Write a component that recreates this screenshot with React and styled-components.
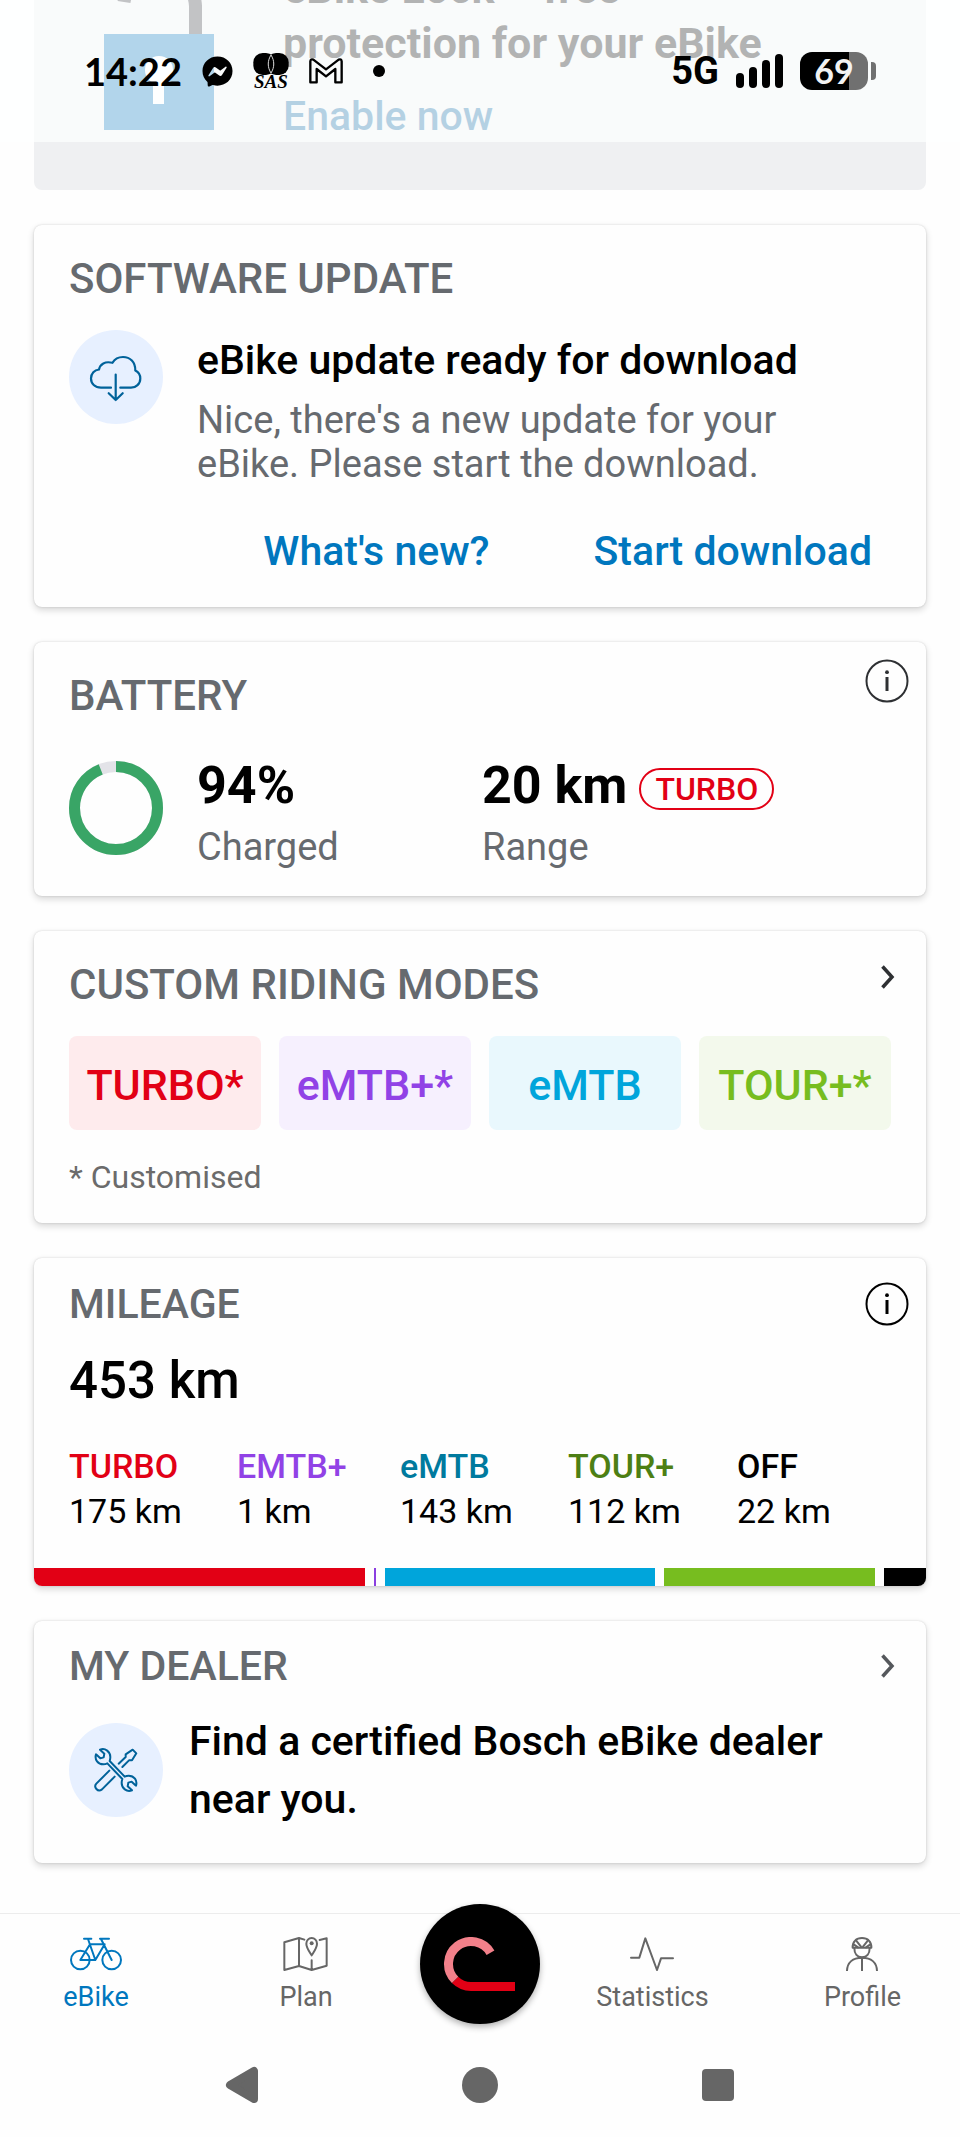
import React from 'react';
import styled, { createGlobalStyle } from 'styled-components';
import { FaFacebookMessenger } from 'react-icons/fa';

const GlobalStyle = createGlobalStyle`
  * {
    box-sizing: border-box;
  }

  body {
    margin: 0;
    background: #fefefe;
    color: #000;
    font-family: Roboto, "Liberation Sans", sans-serif;
  }

  h2, p, dl, dt, dd {
    margin: 0;
  }

  button {
    border: 0;
    padding: 0;
    background: none;
    color: inherit;
    font: inherit;
    cursor: pointer;
  }

  svg {
    display: block;
    flex: none;
  }
`;

const Screen = styled.div`
  position: relative;
  min-height: 100vh;
  display: flex;
  flex-direction: column;
`;

/* ---------- status bar ---------- */

const StatusBar = styled.header`
  position: absolute;
  top: 0;
  left: 0;
  right: 0;
  height: 142px;
  padding: 0 84px;
  display: flex;
  align-items: center;
  justify-content: space-between;
  background: rgba(254, 255, 255, 0.7);
`;

const StatusGroup = styled.div`
  display: flex;
  align-items: center;
  gap: ${(p) => p.$gap}px;
`;

const Clock = styled.span`
  font: 700 38px/44px Lato, sans-serif;
`;

const Carrier = styled.div`
  display: flex;
  flex-direction: column;
  align-items: center;
  font: italic 700 19px/14px "Liberation Serif", serif;
`;

const Dot = styled.span`
  width: 12px;
  height: 12px;
  margin-left: 10px;
  border-radius: 50%;
  background: #000;
`;

const Network = styled.span`
  font-size: 38px;
  line-height: 44px;
  font-weight: 700;
`;

const Signal = styled.span`
  display: flex;
  align-items: flex-end;
  gap: 5px;
`;

const SignalBar = styled.span`
  width: 8px;
  height: ${(p) => p.$height}px;
  border-radius: 4px;
  background: #000;
`;

const PhoneBattery = styled.span`
  display: flex;
  align-items: center;
  gap: 3px;

  &::after {
    content: '';
    width: 5px;
    height: 18px;
    border-radius: 0 4px 4px 0;
    background: #707070;
  }
`;

const PhoneLevel = styled.span`
  width: 68px;
  height: 38px;
  border-radius: 12px;
  background: linear-gradient(to right, #000 72%, #707070 72%);
  color: #f2f2f2;
  text-align: center;
  font: 700 34px/38px Lato, sans-serif;
`;

/* ---------- cards ---------- */

const Feed = styled.main`
  display: flex;
  flex-direction: column;
  gap: 35px;
  padding: 0 34px 50px;
`;

const LockBanner = styled.section`
  height: 190px;
  padding: 0 70px 46px;
  display: flex;
  align-items: flex-end;
  gap: 69px;
  overflow: hidden;
  border-radius: 0 0 8px 8px;
  background: #eff0f2;
`;

const LockImage = styled.svg`
  margin-bottom: 14px;
`;

const LockText = styled.div`
  font-size: 43px;
  line-height: 55px;
  font-weight: 700;
`;

const EnableButton = styled.button`
  && {
    display: block;
    margin-top: 18px;
    color: #0865a0;
    font-size: 41px;
    font-weight: 500;
  }
`;

const Card = styled.section`
  overflow: hidden;
  border-radius: 8px;
  background: #fefefe;
  box-shadow: 0 3px 7px rgba(0, 0, 0, 0.16), 0 0 2px rgba(0, 0, 0, 0.16);
`;

const CardHeader = styled.div`
  display: flex;
  align-items: flex-start;
  justify-content: space-between;
  padding: ${(p) => p.$top - (p.$lift || 0)}px 17px 0 35px;

  h2 {
    padding-top: ${(p) => p.$lift || 0}px;
  }
`;

const CardTitle = styled.h2`
  color: #666a6f;
  font-size: ${(p) => (p.$compact ? 41 : 42)}px;
  line-height: 48px;
  font-weight: 500;
`;

const IconButton = styled.button`
  width: 44px;
  height: 48px;
  display: flex;
  align-items: center;
  justify-content: center;
  color: ${(p) => p.$color || '#000'};
`;

const Row = styled.div`
  display: flex;
  align-items: ${(p) => p.$align || 'flex-start'};
  gap: ${(p) => p.$gap || 34}px;
  padding: ${(p) => p.$top}px 35px ${(p) => p.$bottom || 0}px;
`;

const IconCircle = styled.span`
  flex: none;
  width: 94px;
  height: 94px;
  display: flex;
  align-items: center;
  justify-content: center;
  border-radius: 50%;
  background: #e7f0ff;
  color: #00629a;
`;

const UpdateText = styled.div`
  padding-top: 6px;
`;

const ItemTitle = styled.p`
  font-size: 41px;
  line-height: ${(p) => p.$line || 48}px;
  font-weight: 500;
`;

const ItemBody = styled.p`
  margin-top: ${(p) => p.$top}px;
  color: #666a6f;
  font-size: 38px;
  line-height: 44px;
`;

const Actions = styled.div`
  display: flex;
  justify-content: flex-end;
  gap: 66px;
  padding: 41px 35px 32px;
`;

const TextButton = styled.button`
  && {
    padding: 0 19px;
    color: #0077be;
    font-size: 41px;
    line-height: 48px;
    font-weight: 500;
  }
`;

/* ---------- battery ---------- */

const Ring = styled.svg`
  margin-top: 7px;
`;

const Stats = styled.div`
  flex: 1;
  display: grid;
  grid-template-columns: 285fr 409fr;
`;

const StatValue = styled.div`
  display: flex;
  align-items: center;
  gap: 12px;
  font-size: 52px;
  line-height: 64px;
  font-weight: 700;
`;

const ModeTag = styled.span`
  height: 42px;
  margin-top: 6px;
  padding: 0 14px;
  border: 2px solid #e20015;
  border-radius: 21px;
  color: #e20015;
  font-size: 32px;
  line-height: 38px;
  font-weight: 500;
`;

/* ---------- riding modes ---------- */

const Chips = styled.div`
  display: grid;
  grid-template-columns: repeat(4, 1fr);
  gap: 18px;
  padding: 27px 35px 0;
`;

const Chip = styled.button`
  && {
    height: 94px;
    padding-top: 4px;
    border-radius: 8px;
    background: ${(p) => p.$bg};
    color: ${(p) => p.$color};
    font-size: 43px;
    font-weight: 500;
  }
`;

const Footnote = styled.p`
  padding: 27px 35px 26px;
  color: #6b6b6b;
  font-size: 32px;
  line-height: 40px;
`;

/* ---------- mileage ---------- */

const Total = styled.p`
  padding: 23px 35px 0;
  font-size: 51px;
  line-height: 60px;
  font-weight: 500;
`;

const Distances = styled.dl`
  display: grid;
  grid-template-columns: 168fr 163fr 168fr 169fr 154fr;
  padding: 33px 35px 34px;
  font-size: 34px;
  line-height: 45px;

  dt {
    font-weight: 500;
  }
`;

const ModeName = styled.dt`
  color: ${(p) => p.$color};
`;

const Bar = styled.div`
  display: flex;
  gap: 9px;
  height: 18px;
`;

const Segment = styled.span`
  flex: ${(p) => p.$km} 0 0;
  background: ${(p) => p.$color};
`;

/* ---------- bottom navigation ---------- */

const TabBar = styled.nav`
  margin-top: auto;
  height: 120px;
  display: grid;
  grid-template-columns: 64fr 76fr 40fr 75fr 65fr;
  justify-items: center;
  align-items: start;
  border-top: 1px solid #ececec;
`;

const Tab = styled.a`
  display: flex;
  flex-direction: column;
  align-items: center;
  gap: 10px;
  padding-top: 23px;
  color: ${(p) => (p.$active ? '#0077be' : '#666')};
  font-size: 27px;
  line-height: 32px;
  text-decoration: none;
`;

const RideButton = styled.button`
  && {
    width: 120px;
    height: 120px;
    margin-top: -10px;
    display: flex;
    align-items: center;
    justify-content: center;
    border-radius: 50%;
    background: #000;
    box-shadow: 0 3px 6px rgba(0, 0, 0, 0.3);
  }
`;

const SystemBar = styled.div`
  height: 104px;
  padding: 0 123px;
  display: flex;
  color: #666;
`;

const SystemButton = styled.button`
  flex: 1;
  display: flex;
  align-items: center;
  justify-content: center;
`;

/* ---------- icons ---------- */

const line = {
  fill: 'none',
  stroke: 'currentColor',
  strokeLinejoin: 'round',
  strokeLinecap: 'round',
  'aria-hidden': true,
};

const InfoIcon = () => (
  <svg width="44" height="44" viewBox="0 0 44 44" {...line} strokeWidth="2">
    <circle cx="22" cy="22" r="20.5" />
    <path d="M22 18v14" strokeWidth="3" strokeLinecap="butt" />
    <circle cx="22" cy="13.2" r="1.9" fill="currentColor" stroke="none" />
  </svg>
);

const ChevronIcon = () => (
  <svg width="44" height="48" viewBox="0 0 44 48" {...line} strokeWidth="3.5" strokeLinecap="butt" strokeLinejoin="miter">
    <path d="M17.5 13.500 27 24l-9.500 10.500" />
  </svg>
);

const CloudIcon = () => (
  <svg width="94" height="94" viewBox="0 0 94 94" {...line} strokeWidth="2.2">
    <path d="M42 57.7H32C26 57.7 22 53.5 22 48.5C22 43.5 25.5 40 30 39.5C31 34 36 31 43.5 32.8C46 28.5 50 27 54 27C61 27 66.5 32 66.3 40.5C69.5 42 71.3 45 71.3 48.5C71.3 54 67 57.7 62 57.7H51.3" />
    <path d="M46.7 44.5V70M39.7 63.2L46.7 70L53.7 63.2" />
  </svg>
);

const ToolsIcon = () => (
  <svg width="44" height="44" viewBox="-2 -2 132 132" {...line} strokeWidth="6">
    <path d="M16 3C32 -3 47 9 47 25C47 30 46 34 45 37L90 84C94 82 98 81 102 81C118 81 129 95 124 111L111 99L101 102L99 113L112 125C96 131 81 119 81 103C81 98 82 94 83 91L38 44C34 46 30 47 26 47C10 47 -1 33 4 17L17 29L27 26L29 15Z" />
    <path d="M72 45L93 25V17L114 3L125 14L112 35H103L83 55" />
    <path d="M44 66L5 105C-4 115 9 132 22 122L60 84" />
  </svg>
);

const BatteryRing = ({ level }) => (
  <Ring width="94" height="94" viewBox="0 0 94 94" fill="none" strokeWidth="11" role="img" aria-label={`${level}% charged`}>
    <circle cx="47" cy="47" r="41.5" stroke="#e3e3e8" />
    <circle
      cx="47"
      cy="47"
      r="41.5"
      stroke="#39a566"
      pathLength="100"
      strokeDasharray={`${level} 100`}
      transform="rotate(-90 47 47)"
    />
  </Ring>
);

const BikeIcon = () => (
  <svg width="52" height="34" viewBox="0 0 156 102" {...line} strokeWidth="6">
    <circle cx="31" cy="69" r="28" />
    <circle cx="125" cy="69" r="28" />
    <path d="M42 5H64M54 6L76 69H31L60 22H104L76 69M90 5H117M93 6L125 69" />
  </svg>
);

const MapIcon = () => (
  <svg width="45" height="34" viewBox="0 0 135 102" {...line} strokeWidth="6">
    <path d="M64 8L48 3L4 16V99L48 87L86 99L131 86V4L110 9M48 3V87M86 70V99" />
    <path d="M86 55C78 42 70 32 70 20A16 17 0 0 1 102 20C102 32 94 42 86 55Z" />
    <circle cx="86" cy="19" r="6" fill="currentColor" stroke="none" />
  </svg>
);

const PulseIcon = () => (
  <svg width="44" height="34" viewBox="0 0 132 102" {...line} strokeWidth="6">
    <path d="M3 62H28L46 4L81 99L93 64H129" />
  </svg>
);

const RiderIcon = () => (
  <svg width="32" height="34" viewBox="0 0 96 102" {...line} strokeWidth="6">
    <path d="M20 32C19 14 31 3 48 3C65 3 77 14 76 32Z" />
    <path d="M25 33C25 50 34 61 48 61C62 61 71 50 71 33" />
    <path d="M30 10L45 29M66 10L51 29M23 22L36 31M73 22L60 31" />
    <path d="M3 101C4 77 20 62 48 62C76 62 92 77 93 101M48 62V101" />
  </svg>
);

const RideLogo = () => (
  <svg width="72" height="54" viewBox="0 0 72 54" fill="none" strokeWidth="9">
    <path d="M11.09 42.91A22.5 22.5 0 0 0 27 49.5H71" stroke="#e20015" />
    <path d="M46.49 15.75A22.5 22.5 0 1 0 11.09 42.91" stroke="#f2808a" />
  </svg>
);

const LockDrawing = () => (
  <LockImage width="110" height="142" viewBox="0 0 110 142">
    <path d="M20 14A36 36 0 0 1 91.5 18V54" fill="none" stroke="#37383f" strokeWidth="13" />
    <rect y="46" width="110" height="96" fill="#0074bc" />
    <circle cx="55" cy="82" r="14" fill="#fff" />
    <rect x="49" y="86" width="11" height="30" fill="#fff" />
  </LockImage>
);

const MailIcon = () => (
  <svg width="34" height="26" viewBox="0 0 102 78" {...line} strokeWidth="7">
    <path d="M4 73V10Q5 2 13 5L51 34L89 5Q97 2 98 10V73H79V33L51 55L23 33V73Z" />
  </svg>
);

const CirclesIcon = () => (
  <svg width="36" height="22" viewBox="0 0 108 66">
    <rect x="1" y="0" width="66" height="66" rx="28" />
    <rect x="41" y="0" width="66" height="66" rx="28" />
    <path d="M54 6C43 23 43 43 54 60C65 43 65 23 54 6Z" fill="none" stroke="#ddd" strokeWidth="3" />
  </svg>
);

/* ---------- data ---------- */

const modes = [
  { name: 'TURBO*', color: '#e20015', bg: '#feebed' },
  { name: 'eMTB+*', color: '#9142e6', bg: '#f6f0fe' },
  { name: 'eMTB', color: '#00a5db', bg: '#e9f8fd' },
  { name: 'TOUR+*', color: '#77bd1f', bg: '#f3f9ec' },
];

const distances = [
  { name: 'TURBO', km: 175, color: '#e20015', bar: '#e20015' },
  { name: 'EMTB+', km: 1, color: '#9142e6', bar: '#8b3fe0' },
  { name: 'eMTB', km: 143, color: '#007a9e', bar: '#00a5db' },
  { name: 'TOUR+', km: 112, color: '#4d7f14', bar: '#77bd1f' },
  { name: 'OFF', km: 22, color: '#000', bar: '#000' },
];

const App = () => {
  return (
    <Screen>
      <GlobalStyle />

      <Feed>
        <LockBanner>
          <LockDrawing />
          <LockText>
            <p>eBike Lock – free<br />protection for your eBike</p>
            <EnableButton type="button">Enable now</EnableButton>
          </LockText>
        </LockBanner>

        <Card>
          <CardHeader $top={30}>
            <CardTitle>SOFTWARE UPDATE</CardTitle>
          </CardHeader>
          <Row $top={27}>
            <IconCircle><CloudIcon /></IconCircle>
            <UpdateText>
              <ItemTitle>eBike update ready for download</ItemTitle>
              <ItemBody $top={14}>
                Nice, there's a new update for your<br />eBike. Please start the download.
              </ItemBody>
            </UpdateText>
          </Row>
          <Actions>
            <TextButton type="button">What's new?</TextButton>
            <TextButton type="button">Start download</TextButton>
          </Actions>
        </Card>

        <Card>
          <CardHeader $top={30} $lift={15}>
            <CardTitle>BATTERY</CardTitle>
            <IconButton type="button" aria-label="Battery info" $color="#2e3033"><InfoIcon /></IconButton>
          </CardHeader>
          <Row $top={34} $bottom={27}>
            <BatteryRing level={94} />
            <Stats>
              <div>
                <StatValue>94%</StatValue>
                <ItemBody $top={7}>Charged</ItemBody>
              </div>
              <div>
                <StatValue>20 km <ModeTag>TURBO</ModeTag></StatValue>
                <ItemBody $top={7}>Range</ItemBody>
              </div>
            </Stats>
          </Row>
        </Card>

        <Card>
          <CardHeader $top={30} $lift={8}>
            <CardTitle>CUSTOM RIDING MODES</CardTitle>
            <IconButton type="button" aria-label="Open riding modes" $color="#2e3033"><ChevronIcon /></IconButton>
          </CardHeader>
          <Chips>
            {modes.map((mode) => (
              <Chip key={mode.name} type="button" $bg={mode.bg} $color={mode.color}>{mode.name}</Chip>
            ))}
          </Chips>
          <Footnote>* Customised</Footnote>
        </Card>

        <Card>
          <CardHeader $top={22}>
            <CardTitle $compact>MILEAGE</CardTitle>
            <IconButton type="button" aria-label="Mileage info"><InfoIcon /></IconButton>
          </CardHeader>
          <Total>453 km</Total>
          <Distances>
            {distances.map((item) => (
              <div key={item.name}>
                <ModeName $color={item.color}>{item.name}</ModeName>
                <dd>{item.km} km</dd>
              </div>
            ))}
          </Distances>
          <Bar>
            {distances.map((item) => (
              <Segment key={item.name} $km={item.km} $color={item.bar} />
            ))}
          </Bar>
        </Card>

        <Card>
          <CardHeader $top={21}>
            <CardTitle $compact>MY DEALER</CardTitle>
            <IconButton type="button" aria-label="Open dealer" $color="#55585c"><ChevronIcon /></IconButton>
          </CardHeader>
          <Row $top={22} $bottom={35} $gap={26} $align="center">
            <IconCircle><ToolsIcon /></IconCircle>
            <ItemTitle $line={58}>Find a certified Bosch eBike dealer<br />near you.</ItemTitle>
          </Row>
        </Card>
      </Feed>

      <TabBar>
        <Tab href="#ebike" $active><BikeIcon />eBike</Tab>
        <Tab href="#plan"><MapIcon />Plan</Tab>
        <RideButton type="button" aria-label="Start ride"><RideLogo /></RideButton>
        <Tab href="#statistics"><PulseIcon />Statistics</Tab>
        <Tab href="#profile"><RiderIcon />Profile</Tab>
      </TabBar>

      <SystemBar>
        <SystemButton type="button" aria-label="Back">
          <svg width="34" height="38" viewBox="0 0 34 38" fill="currentColor" stroke="currentColor" strokeWidth="8" strokeLinejoin="round">
            <path d="M5 19L29 5V33Z" />
          </svg>
        </SystemButton>
        <SystemButton type="button" aria-label="Home">
          <svg width="36" height="36" viewBox="0 0 36 36" fill="currentColor">
            <circle cx="18" cy="18" r="18" />
          </svg>
        </SystemButton>
        <SystemButton type="button" aria-label="Recent apps">
          <svg width="32" height="32" viewBox="0 0 32 32" fill="currentColor">
            <rect width="32" height="32" rx="4" />
          </svg>
        </SystemButton>
      </SystemBar>

      <StatusBar>
        <StatusGroup $gap={20}>
          <Clock>14:22</Clock>
          <FaFacebookMessenger size={31} />
          <Carrier><CirclesIcon />SAS</Carrier>
          <MailIcon />
          <Dot />
        </StatusGroup>
        <StatusGroup $gap={17}>
          <Network>5G</Network>
          <Signal>
            <SignalBar $height={15} />
            <SignalBar $height={21} />
            <SignalBar $height={28} />
            <SignalBar $height={34} />
          </Signal>
          <PhoneBattery><PhoneLevel>69</PhoneLevel></PhoneBattery>
        </StatusGroup>
      </StatusBar>
    </Screen>
  );
};

export default App;
